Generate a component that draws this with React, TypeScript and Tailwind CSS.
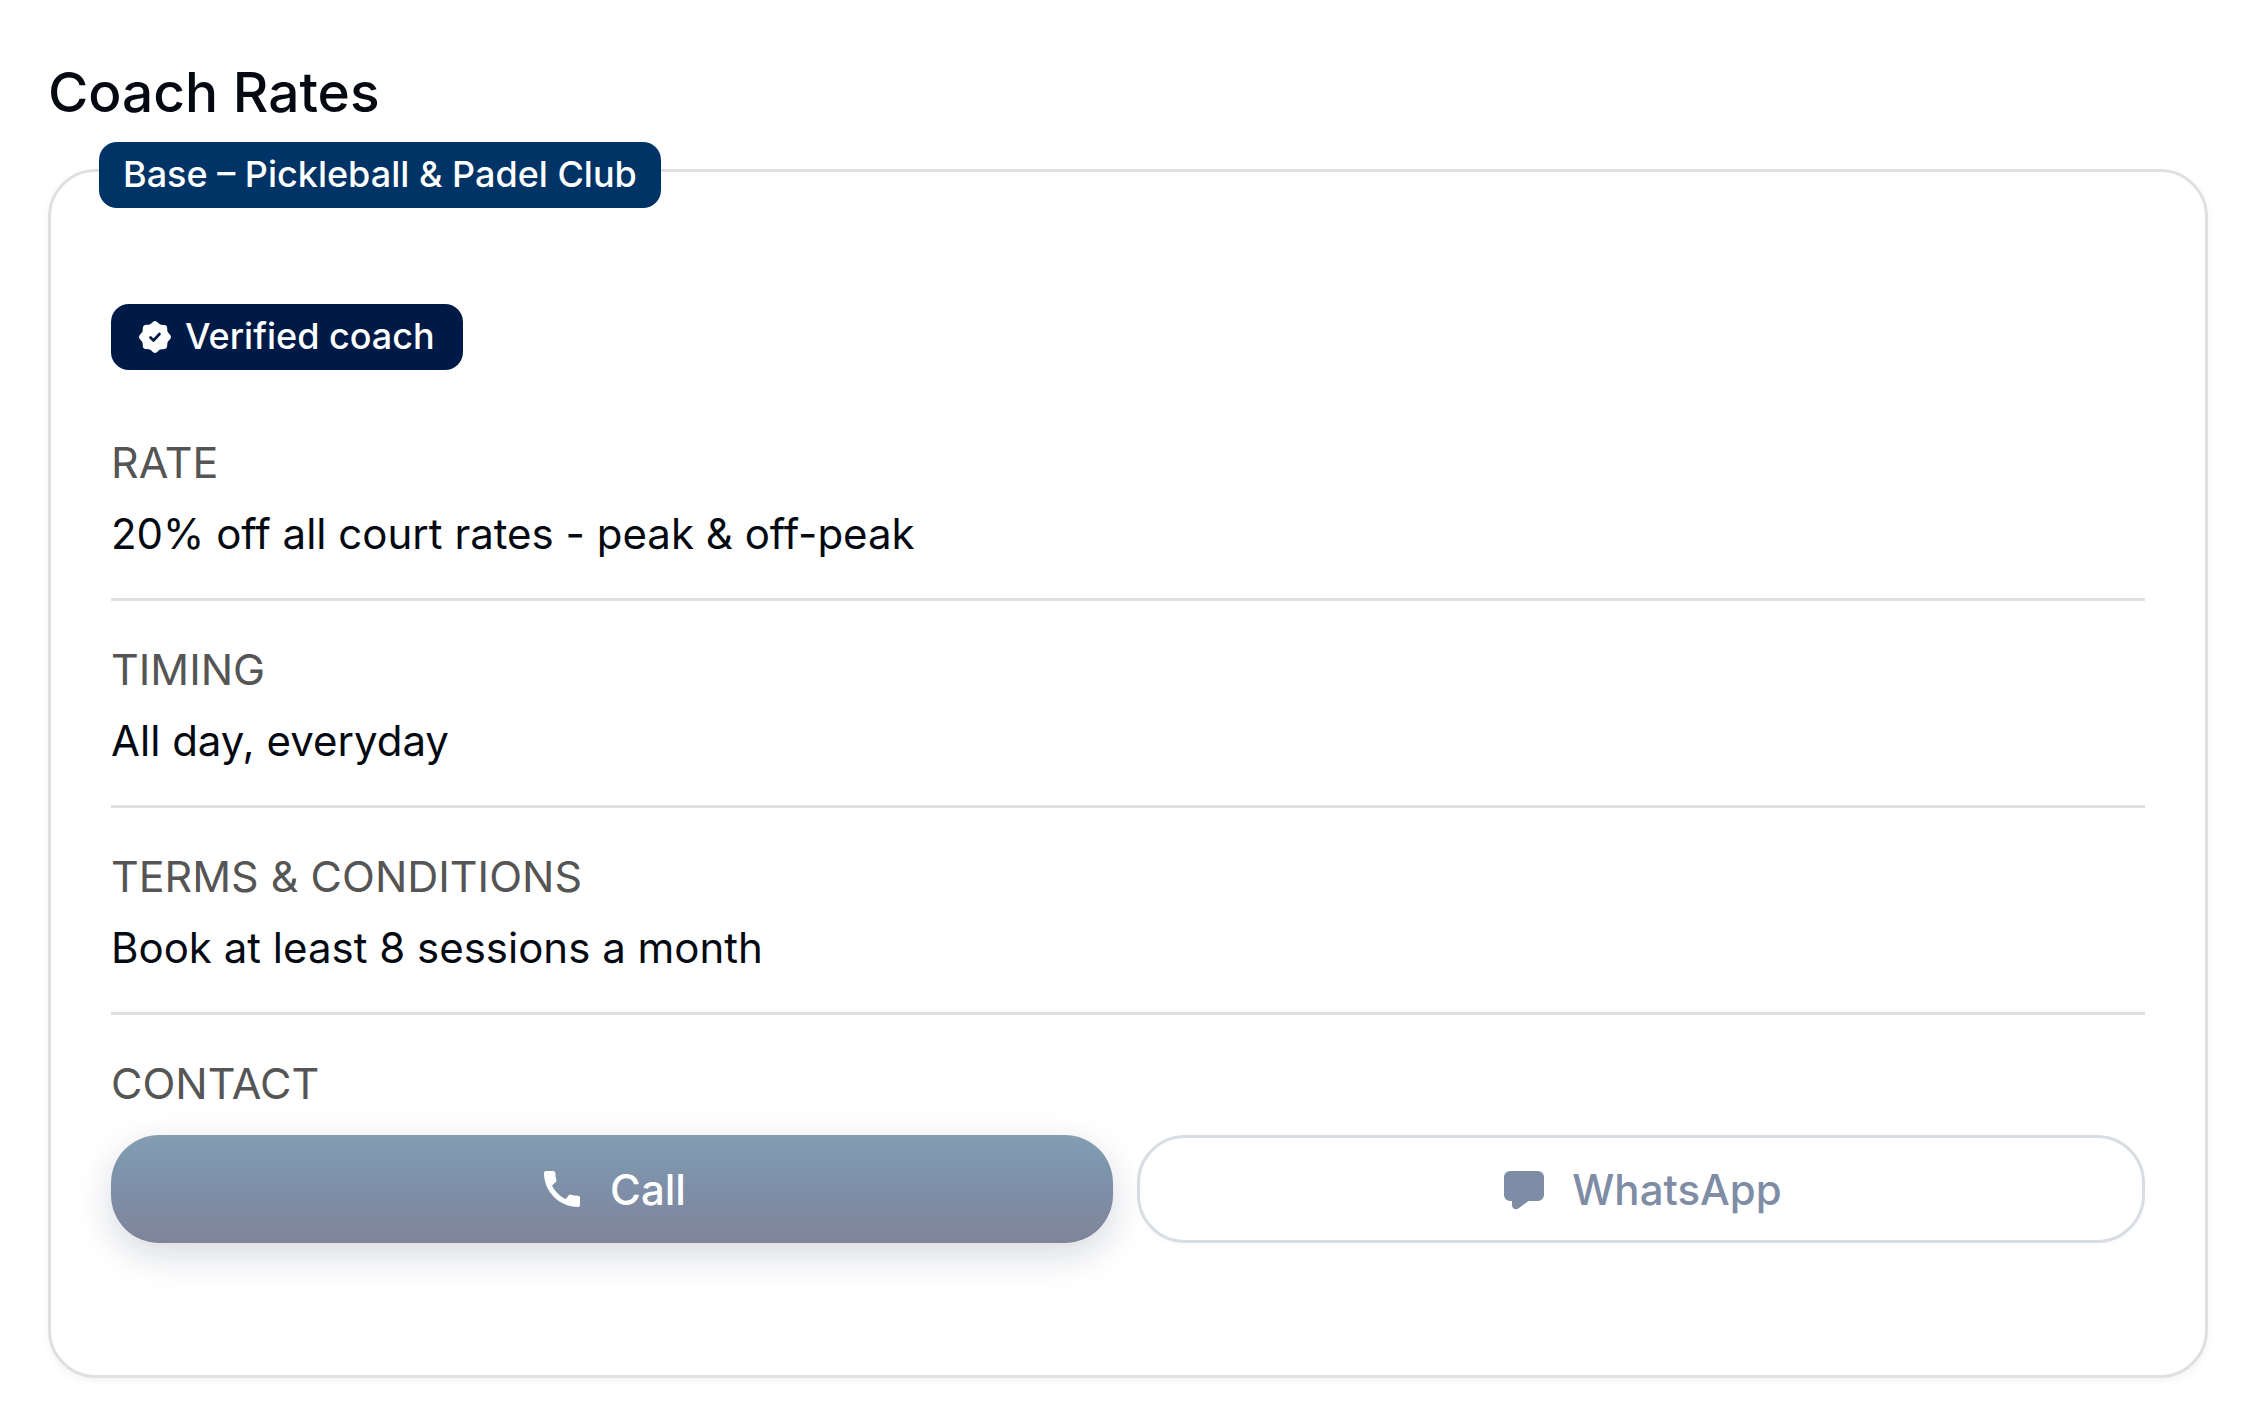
import type { ReactNode } from 'react';
import { MdCall } from 'react-icons/md';

export default function App() {
  return (
    <main className="min-h-screen bg-white px-12 pt-[54px] font-[Inter,'Open_Sans',sans-serif] text-[#050a12]">
      <h1 className="text-[55px] leading-[76px] font-medium">Coach Rates</h1>

      <section className="relative mt-[39px] rounded-[48px] border-3 border-[#e0e0e0] bg-white px-[60px] pt-[132px] pb-[132px] shadow-[0_3px_9px_rgba(0,0,0,0.05)]">
        {/* Venue name sits on the top border of the card */}
        <h2 className="absolute -top-[30px] left-12 rounded-[18px] bg-[#003366] px-6 pb-[2px] text-[36px] leading-[64px] font-medium text-white">
          Base – Pickleball &amp; Padel Club
        </h2>

        <div className="flex w-fit items-center gap-[14px] rounded-[18px] bg-[#001a47] px-7 text-[36px] leading-[64px] font-medium text-white">
          <VerifiedIcon />
          <span className="pb-[2px]">Verified coach</span>
        </div>

        <dl className="mt-14">
          {details.map((item) => (
            <div key={item.label} className="mb-8 border-b-3 border-[#e0e0e0] pb-7 text-[42px] leading-[72px]">
              <dt className="text-[43px] text-[#555555]">{item.label}</dt>
              <dd>{item.value}</dd>
            </div>
          ))}
        </dl>

        <h3 className="text-[43px] leading-[72px] text-[#555555]">CONTACT</h3>
        <div className="mt-4 flex gap-6">
          <ContactButton className="bg-[linear-gradient(180deg,#869db2_0%,#7e98ae_20%,#7e8ca5_60%,#7f8599_100%)] text-white shadow-[0_12px_36px_rgba(0,26,71,0.16)]">
            <MdCall className="size-12" />
            Call
          </ContactButton>
          <ContactButton className="border-3 border-[#d8dde4] text-[#7e8da5] shadow-[0_3px_6px_rgba(0,0,0,0.02)]">
            <ChatIcon />
            WhatsApp
          </ContactButton>
        </div>
      </section>
    </main>
  );
}

function ContactButton({ className, children }: { className: string; children: ReactNode }) {
  return (
    <button type="button" className={`flex h-[108px] flex-1 items-center justify-center gap-6 rounded-[48px] text-[42px] font-medium ${className}`}>
      {children}
    </button>
  );
}

function VerifiedIcon() {
  return (
    <svg viewBox="0 0 32 32" className="size-8" aria-hidden="true">
      <path
        fill="currentColor"
        d="M16 0c2.200 0 3.300 2.600 5.200 3.400s4.500-.2 6.100 1.300.5 4.200 1.300 6.100S32 13.800 32 16s-2.600 3.300-3.400 5.200.2 4.500-1.300 6.100-4.200.5-6.100 1.300S18.200 32 16 32s-3.300-2.600-5.200-3.400-4.500.2-6.100-1.300-.5-4.200-1.300-6.100S0 18.200 0 16s2.600-3.300 3.400-5.200-.2-4.500 1.300-6.100 4.200-.5 6.100-1.300S13.800 0 16 0Z"
      />
      <path d="m11.500 16.500 3 3 6-6.500" fill="none" stroke="#001a47" strokeWidth="2.600" strokeLinecap="round" strokeLinejoin="round" />
    </svg>
  );
}

function ChatIcon() {
  return (
    <svg viewBox="0 0 48 48" className="size-12" aria-hidden="true">
      <path
        fill="currentColor"
        d="M10 6h28a6 6 0 0 1 6 6v18a6 6 0 0 1-6 6H28.500L19 43c-3 2.200-6.500 1.400-7-2.500V36h-2a6 6 0 0 1-6-6V12a6 6 0 0 1 6-6Z"
      />
    </svg>
  );
}

// Details of the offer
const details = [
  { label: 'RATE', value: '20% off all court rates - peak & off-peak' },
  { label: 'TIMING', value: 'All day, everyday' },
  { label: 'TERMS & CONDITIONS', value: 'Book at least 8 sessions a month' },
];
